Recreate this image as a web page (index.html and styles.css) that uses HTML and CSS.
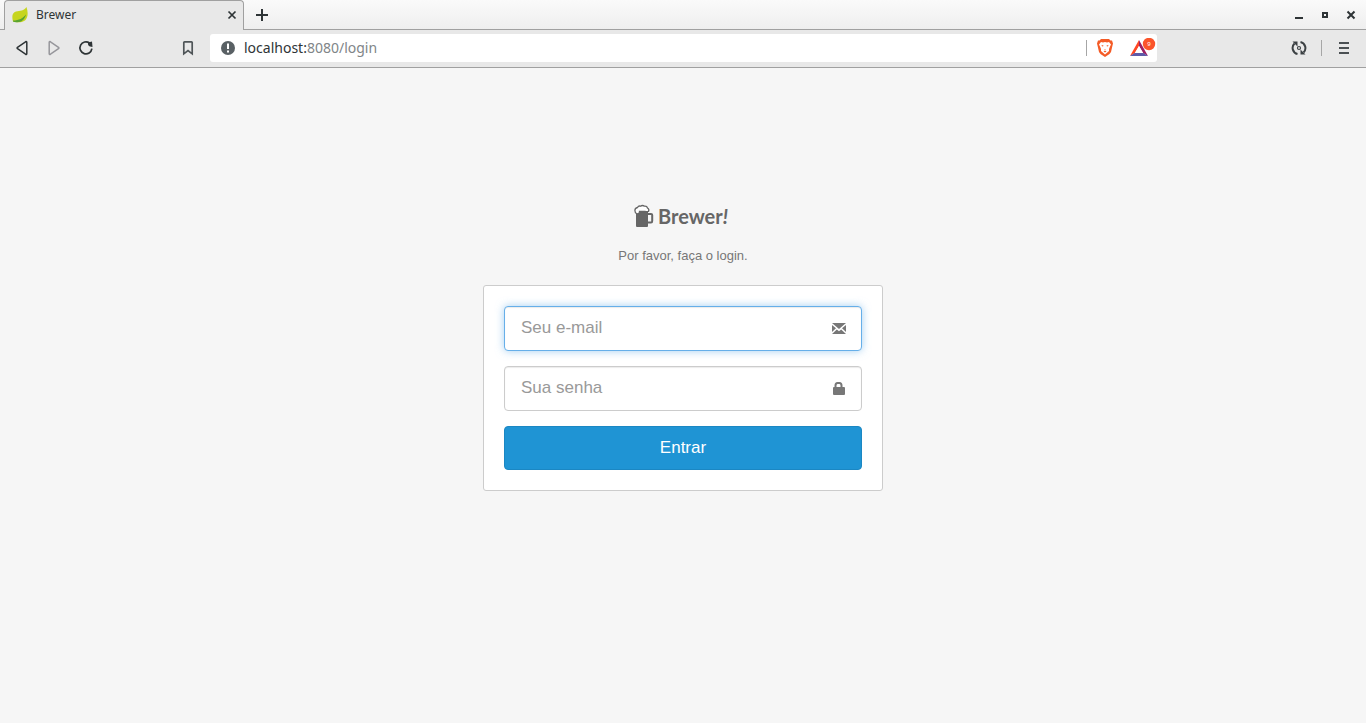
FILE: index.html
```html
<!DOCTYPE html>
<html lang="pt-BR">
<head>
<meta charset="utf-8">
<meta name="viewport" content="width=device-width, initial-scale=1">
<title>Brewer</title>
<link rel="stylesheet" href="styles.css">
</head>
<body>
<header class="browser">
  <div class="tabs">
    <div class="tab">
      <svg class="favicon" width="16" height="16" viewBox="0 0 16 16"><path d="M14.500 0C16 5 16.500 10 13 13.500C9.500 16 4 15.500 1 14.500C-.5 9 .5 5.500 4 4.500C8 3.500 12 4 14.500 0Z" fill="#c6d51f"/><path d="M1 13.500C7 13.500 11 11.500 14 6.500C14 10 11 14.500 7 15C4.500 15.400 2.500 15.500 1 14.500Z" fill="#5aa331"/><path d="M1 11.500C7 12 11 10 14 6" fill="none" stroke="#c6d51f" stroke-width="2"/></svg>
      <span class="tab-title">Brewer</span>
      <button class="icon-button" aria-label="Fechar guia"><svg width="10" height="10" viewBox="0 0 10 10"><path d="M1.500 1.500L8.500 8.500M8.500 1.500L1.500 8.500" stroke="#2e3436" stroke-width="1.700"/></svg></button>
    </div>
    <button class="icon-button new-tab" aria-label="Nova guia"><svg width="12" height="12" viewBox="0 0 12 12"><path d="M6 0V12M0 6H12" stroke="#2e3436" stroke-width="2"/></svg></button>
    <div class="window-controls">
      <button class="icon-button" aria-label="Minimizar"><svg width="10" height="10" viewBox="0 0 10 10"><path d="M1 8H9" stroke="#2e3436" stroke-width="2"/></svg></button>
      <button class="icon-button" aria-label="Maximizar"><svg width="10" height="10" viewBox="0 0 10 10"><path d="M3 3H7V7H3Z" fill="none" stroke="#2e3436" stroke-width="2"/></svg></button>
      <button class="icon-button" aria-label="Fechar"><svg width="10" height="10" viewBox="0 0 10 10"><path d="M1.500 1.500L8.500 8.500M8.500 1.500L1.500 8.500" stroke="#2e3436" stroke-width="2"/></svg></button>
    </div>
  </div>
  <div class="toolbar">
    <nav class="navigation" aria-label="Navegação">
      <button class="icon-button" aria-label="Voltar"><svg width="16" height="16" viewBox="0 0 16 16"><path d="M11.500 1.800Q12.800 1.200 12.800 2.600V13.400Q12.800 14.800 11.500 14.200L3.500 8.700Q2.700 8 3.500 7.300Z" fill="none" stroke="#2e3436" stroke-width="1.500"/></svg></button>
      <button class="icon-button" aria-label="Avançar"><svg width="16" height="16" viewBox="0 0 16 16"><path d="M4.500 1.800Q3.200 1.200 3.200 2.600V13.400Q3.200 14.800 4.500 14.200L12.500 8.700Q13.300 8 12.500 7.300Z" fill="none" stroke="#96969b" stroke-width="1.500"/></svg></button>
      <button class="icon-button" aria-label="Recarregar"><svg width="16" height="16" viewBox="0 0 16 16"><path d="M11.500 3A6 6 0 1 0 13.900 8.700" fill="none" stroke="#2e3436" stroke-width="1.700"/><path d="M10 2.500L14 1.500L14.500 7L12 6.500Q9.500 5.500 10 2.500Z" fill="#2e3436"/></svg></button>
      <button class="icon-button bookmark" aria-label="Favoritar"><svg width="16" height="16" viewBox="0 0 16 16"><path d="M3.800 2.500Q3.800 1.800 4.500 1.800H11.500Q12.200 1.800 12.200 2.500V13.800L8 10.500L3.800 13.800Z" fill="none" stroke="#4f5558" stroke-width="1.700"/></svg></button>
    </nav>
    <div class="address">
      <svg width="16" height="16" viewBox="0 0 16 16"><circle cx="8" cy="8" r="7" fill="#596064"/><path d="M8 3.500V9M8 10.500V12.500" stroke="#fff" stroke-width="2"/></svg>
      <span class="url">localhost:<span class="url-path">8080/login</span></span>
      <span class="divider"></span>
      <button class="icon-button shield" aria-label="Brave Shields"><svg width="18" height="20" viewBox="0 0 18 20"><path d="M5 1H13L14.500 2.500H16L17 5.500L16.500 7.500L15 14L13.500 16L9 19L4.500 16L3 14L1.500 7.500L1 5.500L2 2.500H3.500Z" fill="#f45b26"/><path d="M5 4L7 4.500L9 4L11 4.500L13 4L15 6.500L14 8.500L13 11L13 13L9 16.500L5 13L5 11L4 8.500L3 6.500Z" fill="#fff"/><path d="M5.500 7L7.500 7.500L7 8.500L6 8.300ZM12.500 7L10.500 7.500L11 8.500L12 8.300ZM8.300 11H9.700L9 12ZM7.500 13.500L9 12.500L10.500 13.500L9 14.500Z" fill="#f45b26"/></svg></button>
      <button class="icon-button rewards" aria-label="Recompensas"><svg width="26" height="20" viewBox="0 0 26 20"><path d="M9 2L0 18L5 15L9 8Z" fill="#ff4724"/><path d="M9 2L18 18L13 15L9 8Z" fill="#9e1f63"/><path d="M0 18H18L13.500 15H4.500Z" fill="#5e5aa8"/><path d="M9 8L4.800 15H13.200Z" fill="#fff"/><circle cx="19" cy="6" r="6.200" fill="#fb542b"/><text class="badge-text" x="19" y="8" text-anchor="middle">9</text></svg></button>
    </div>
    <div class="actions">
      <button class="icon-button" aria-label="Sincronizar"><svg width="16" height="16" viewBox="0 0 16 16"><path d="M6.500 14A6.200 6.200 0 0 1 3.500 3.500M9.500 2A6.200 6.200 0 0 1 12.500 12.500" fill="none" stroke="#3c4144" stroke-width="2"/><path d="M1.500 1.500H6.500V6.500ZM14.500 14.500H9.500V9.500Z" fill="#3c4144"/><circle cx="8" cy="8" r="1.500" fill="none" stroke="#3c4144" stroke-width="1.200"/></svg></button>
      <span class="divider"></span>
      <button class="icon-button" aria-label="Menu"><svg width="16" height="16" viewBox="0 0 16 16"><path d="M3 3H13M3 8H13M3 13H13" stroke="#4b5053" stroke-width="2"/></svg></button>
    </div>
  </div>
</header>
<main class="page">
  <h1 class="brand">
    <svg width="20" height="24" viewBox="0 0 20 24"><path d="M2 8H14V22Q14 23 13 23H3Q2 23 2 22Z" fill="#666"/><path d="M14 10H17Q18.200 10 18.200 11V17Q18.200 18.500 17 18.500H14" fill="none" stroke="#666" stroke-width="2"/><path d="M3 10Q.9 9 .9 6.500Q.9 4 3.500 3.500Q4.500 1.500 6.500 2.200Q8.500 .8 10.500 2.200Q13 2 13.500 4Q15.500 5 14.500 7.500Q13 8 11 7.500H5.500Q5.500 9.500 4.500 9.500Z" fill="#fff" stroke="#666" stroke-width="1.300"/></svg>
    <span>Brewer<i>!</i></span>
  </h1>
  <p class="intro">Por favor, faça o login.</p>
  <form class="card">
    <div class="field">
      <input class="input input-active" type="email" placeholder="Seu e-mail" aria-label="Seu e-mail">
      <svg class="field-icon" width="14" height="14" viewBox="0 0 14 14"><path d="M0 2H14L7 8ZM0 4L4 7.200L0 11ZM14 4L10 7.200L14 11ZM0 13L4.800 8.500L7 10.300L9.200 8.500L14 13Z" fill="#777"/></svg>
    </div>
    <div class="field">
      <input class="input" type="password" placeholder="Sua senha" aria-label="Sua senha">
      <svg class="field-icon" width="14" height="14" viewBox="0 0 14 14"><path d="M3.500 7V4.500Q3.500 2 5.500 2H7.500Q9.500 2 9.500 4.500V7" fill="none" stroke="#777" stroke-width="2"/><rect x="1" y="6" width="12" height="8" rx="1" fill="#777"/></svg>
    </div>
    <button class="submit" type="submit">Entrar</button>
  </form>
</main>
</body>
</html>
```
FILE: styles.css
```css
* { box-sizing: border-box; }
body { margin: 0; min-height: 100vh; background: #f6f6f6; font-family: "Liberation Sans", Arial, sans-serif; }
svg { display: block; flex: none; }
.icon-button { display: flex; align-items: center; justify-content: center; flex: none; padding: 0; border: 0; background: transparent; }
.browser { font-family: "Noto Sans", sans-serif; background: #e8e8e8; border-bottom: 1px solid #a0a0a0; }
.tabs { display: flex; height: 30px; padding-left: 4px; background: linear-gradient(#fafafa, #eeeeee); box-shadow: inset 0 -1px #a0a0a0; }
.tab { display: flex; align-items: center; gap: 8px; width: 240px; padding: 0 6px 1px 7px; border: 1px solid #a0a0a0; border-bottom: 0; border-radius: 4px 4px 0 0; background: #e8e8e8; }
.tab-title { flex: 1; font-size: 12px; line-height: 16px; color: #2e3436; }
.new-tab { margin-left: 12px; }
.window-controls { display: flex; gap: 16px; margin-left: auto; padding-right: 10px; }
.toolbar { display: grid; grid-template-columns: 210px minmax(0, 1fr) 209px; align-items: center; height: 37px; padding-bottom: 1px; }
.navigation { display: flex; gap: 16px; padding: 0 14px; }
.bookmark { margin-left: auto; }
.address { display: flex; align-items: center; height: 28px; padding: 0 1px 0 10px; border-radius: 3px; background: #fff; }
.url { flex: 1; padding-left: 8px; font-size: 14px; line-height: 20px; color: #2e3436; }
.url-path { color: #808588; }
.divider { width: 1px; height: 16px; background: #a6a6a6; }
.shield { margin-left: 9px; }
.rewards { margin-left: 16px; }
.badge-text { font-family: "Noto Sans", sans-serif; font-size: 6px; fill: #fff; }
.actions { display: flex; align-items: center; justify-content: flex-end; gap: 14px; padding-right: 14px; }
.page { display: flex; flex-direction: column; align-items: center; padding: 136px 16px 32px; }
.brand { display: flex; align-items: center; gap: 4px; margin: 0; padding-right: 4px; color: #666; font: 700 20px/24px Lato, sans-serif; }
.intro { margin: 18px 0 20px; font-size: 13px; line-height: 19px; color: #777; }
.card { display: flex; flex-direction: column; gap: 15px; width: 100%; max-width: 400px; padding: 20px; border: 1px solid #ccc; border-radius: 3px; background: #fff; }
.field { position: relative; }
.input { display: block; width: 100%; height: 45px; padding: 10px 48px 12px 16px; border: 1px solid #ccc; border-radius: 4px; outline: 0; background: #fff; box-shadow: inset 0 1px 1px rgba(0, 0, 0, .08); color: #555; font: 17px/21px "Liberation Sans", Arial, sans-serif; }
.input::placeholder { color: #999; opacity: 1; }
.input-active { border-color: #66afe9; box-shadow: inset 0 1px 1px rgba(0, 0, 0, .08), 0 0 8px rgba(102, 175, 233, .6); }
.field-icon { position: absolute; right: 16px; top: 15px; pointer-events: none; }
.submit { height: 44px; padding: 0 16px; border: 1px solid #1b87c3; border-radius: 4px; background: #1f94d4; color: #fff; font: 17px/22px "Liberation Sans", Arial, sans-serif; }
```
